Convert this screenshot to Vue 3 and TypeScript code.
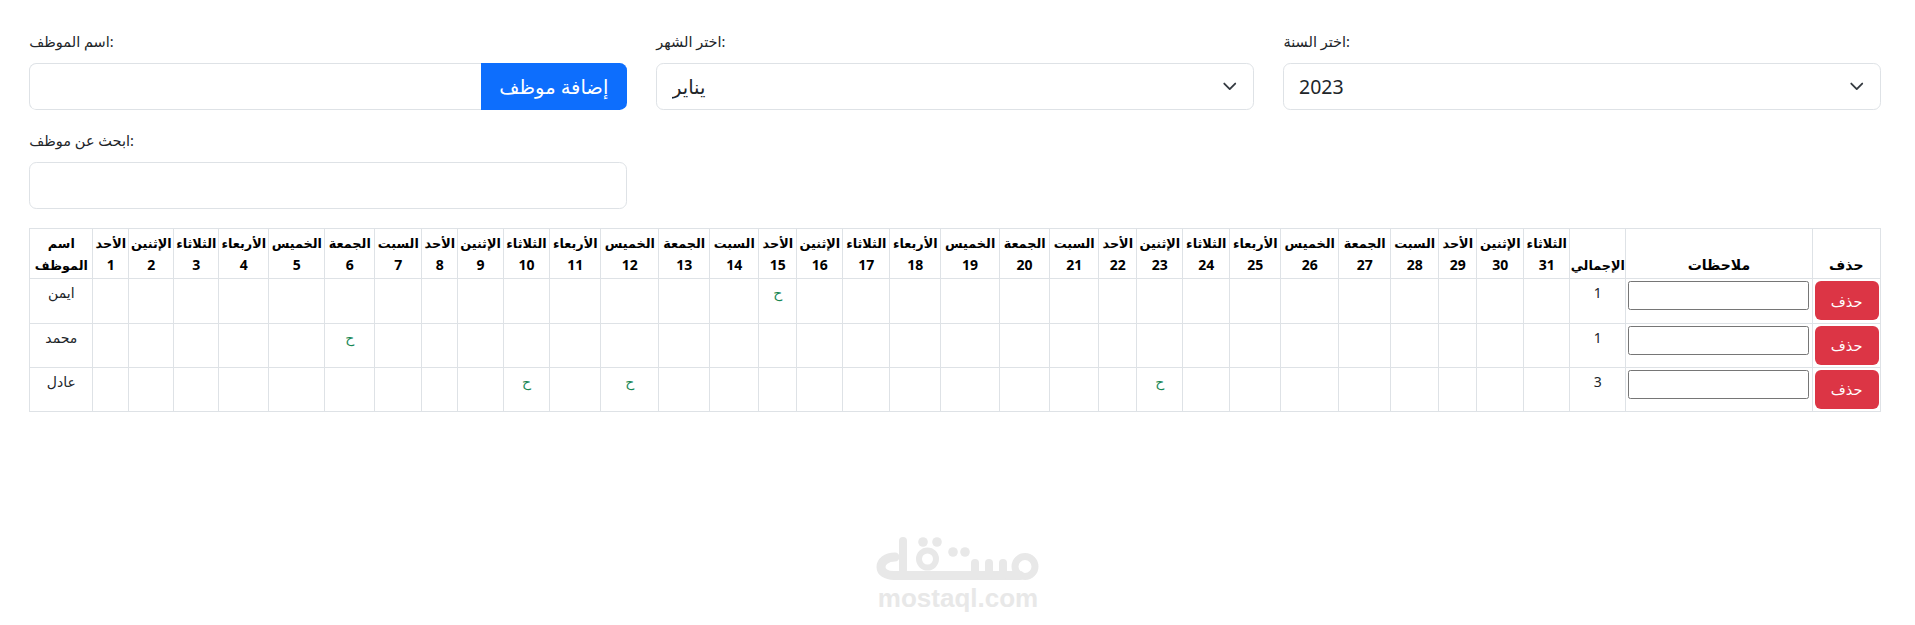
<script setup lang="ts">
const dayNames = ['الأحد', 'الإثنين', 'الثلاثاء', 'الأربعاء', 'الخميس', 'الجمعة', 'السبت']
const days = Array.from({ length: 31 }, (_, i) => ({ n: i + 1, name: dayNames[i % 7] }))
const dayWidths = [36, 45, 45, 50, 56, 50, 47, 36, 45.4, 46.6, 51, 58, 51, 49, 38, 46, 47, 51, 58.7, 50.3, 49, 38, 46, 47, 51, 58, 52, 48, 38, 47, 46]
const employees = [
  { name: 'ايمن', marks: [15], total: 1 },
  { name: 'محمد', marks: [6], total: 1 },
  { name: 'عادل', marks: [10, 12, 23], total: 3 },
]
</script>

<template>
  <div class="page">
    <div class="filters">
      <div class="field">
        <label class="lbl">اسم الموظف:</label>
        <div class="group">
          <input class="ctl joined" type="text" />
          <button class="add" type="button">إضافة موظف</button>
        </div>
      </div>
      <div class="field">
        <label class="lbl">اختر الشهر:</label>
        <div class="sel">
          <select class="ctl pick"><option>يناير</option></select>
          <svg class="chev" viewBox="0 0 16 16"><path d="m2 5 6 6 6-6" fill="none" stroke="#343a40" stroke-width="2" stroke-linecap="round" stroke-linejoin="round" /></svg>
        </div>
      </div>
      <div class="field">
        <label class="lbl">اختر السنة:</label>
        <div class="sel">
          <select class="ctl pick"><option>2023</option></select>
          <svg class="chev" viewBox="0 0 16 16"><path d="m2 5 6 6 6-6" fill="none" stroke="#343a40" stroke-width="2" stroke-linecap="round" stroke-linejoin="round" /></svg>
        </div>
      </div>
      <div class="field">
        <label class="lbl">ابحث عن موظف:</label>
        <input class="ctl" type="text" />
      </div>
    </div>

    <table class="grid">
      <colgroup>
        <col :style="{ width: '63px' }" />
        <col v-for="(w, i) in dayWidths" :key="i" :style="{ width: w + 'px' }" />
        <col :style="{ width: '56px' }" />
        <col :style="{ width: '186.4px' }" />
        <col />
      </colgroup>
      <thead>
        <tr>
          <th><span class="word">اسم</span><span class="word">الموظف</span></th>
          <th v-for="d in days" :key="d.n"><span class="word">{{ d.name }}</span><span class="num">{{ d.n }}</span></th>
          <th><span class="word">الإجمالي</span></th>
          <th><span class="word big">ملاحظات</span></th>
          <th><span class="word big">حذف</span></th>
        </tr>
      </thead>
      <tbody>
        <tr v-for="e in employees" :key="e.name">
          <td>{{ e.name }}</td>
          <td v-for="d in days" :key="d.n" class="mark"><span v-if="e.marks.includes(d.n)">ح</span></td>
          <td>{{ e.total }}</td>
          <td class="tight"><input class="note" type="text" /></td>
          <td class="tight"><button class="del" type="button">حذف</button></td>
        </tr>
      </tbody>
    </table>

    <div class="wm">
      <svg class="wm-logo" viewBox="0 0 176 56" aria-hidden="true">
        <g fill="none" stroke="#e8e8e8" stroke-width="9" stroke-linecap="round" stroke-linejoin="round">
          <path d="M33 11 V40" stroke-width="8" />
          <path d="M25 27 C16 27 11 32 11 37 C11 42 16 45.5 24 45.5 H150" />
          <circle cx="57.5" cy="29" r="8.5" stroke-width="6" />
          <path d="M105 33 V45 M119 33 V45 M133 33 V45" stroke-width="8" />
          <circle cx="155" cy="36.5" r="10" stroke-width="7" />
        </g>
        <g fill="#e8e8e8">
          <circle cx="53" cy="12" r="4.8" />
          <circle cx="67" cy="12" r="4.8" />
          <circle cx="83" cy="22" r="4.8" />
          <circle cx="95" cy="22" r="4.8" />
        </g>
      </svg>
      <span class="wm-url">mostaql.com</span>
    </div>
  </div>
</template>

<style>
html, body { margin: 0; background: #fff; }
</style>

<style scoped>
.page {
  position: relative;
  height: 625px;
  box-sizing: border-box;
  padding: 28px 34px 0 29.3px;
  font-family: "Noto Sans", "DejaVu Sans", sans-serif;
  color: #212529;
  overflow: hidden;
}
.filters {
  display: grid;
  grid-template-columns: repeat(3, 1fr);
  column-gap: 29.5px;
  row-gap: 17.3px;
}
.field { display: flex; flex-direction: column; }
.lbl {
  height: 26px;
  margin-bottom: 9px;
  font-size: 14.5px;
  line-height: 26px;
  direction: ltr;
  text-align: left;
}
.ctl {
  box-sizing: border-box;
  width: 100%;
  height: 47px;
  padding: 0 14.6px;
  border: 1px solid #dee2e6;
  border-radius: 7.3px;
  background: #fff;
  color: #212529;
  font: inherit;
  font-size: 19.5px;
  outline: none;
}
.group { display: flex; }
.joined { flex: 1; min-width: 0; border-right: 0; border-radius: 7.3px 0 0 7.3px; }
.add {
  flex: 0 0 146px;
  height: 47px;
  border: 0;
  border-radius: 0 7.3px 7.3px 0;
  background: #0d6efd;
  color: #fff;
  font: inherit;
  font-size: 19.5px;
  padding: 0;
}
.sel { position: relative; }
.pick { appearance: none; -webkit-appearance: none; }
.chev { position: absolute; right: 14.6px; top: 16.2px; width: 19.5px; height: 14.6px; pointer-events: none; }
.grid {
  table-layout: fixed;
  width: 100%;
  margin-top: 19.2px;
  border-collapse: collapse;
  font-size: 14px;
}
.grid th, .grid td {
  box-sizing: border-box;
  border: 1px solid #dee2e6;
  text-align: center;
  overflow: hidden;
}
.grid th {
  height: 49px;
  padding: 2.4px 0;
  vertical-align: bottom;
  font-weight: 700;
  color: #000;
  white-space: nowrap;
}
.word, .num { display: block; height: 22px; line-height: 22px; }
.word { font-size: 12.8px; }
.word.big { font-size: 14px; }
.num { font-size: 14px; }
.grid td { height: 44.3px; padding: 3px 0; vertical-align: top; line-height: 22px; }
.grid td.tight { padding: 2px; }
.mark { color: #198754; }
.mark span { line-height: 20px; }
.note {
  display: block;
  box-sizing: border-box;
  width: 181px;
  height: 29px;
  margin: 0 auto;
  border: 1px solid #767676;
  border-radius: 2.4px;
  background: #fff;
}
.del {
  display: block;
  width: 64px;
  height: 39px;
  margin: 0 auto;
  border: 0;
  border-radius: 6px;
  background: #dc3545;
  color: #fff;
  font: inherit;
  font-size: 14.5px;
  padding: 0;
}
.wm {
  position: absolute;
  left: 870px;
  top: 530px;
  width: 176px;
  display: flex;
  flex-direction: column;
  align-items: center;
}
.wm-logo { display: block; width: 176px; height: 56px; }
.wm-url {
  margin-top: -1px;
  font-family: "Liberation Sans", sans-serif;
  font-weight: 700;
  font-size: 26px;
  line-height: 26px;
  color: #e8e8e8;
}
</style>
